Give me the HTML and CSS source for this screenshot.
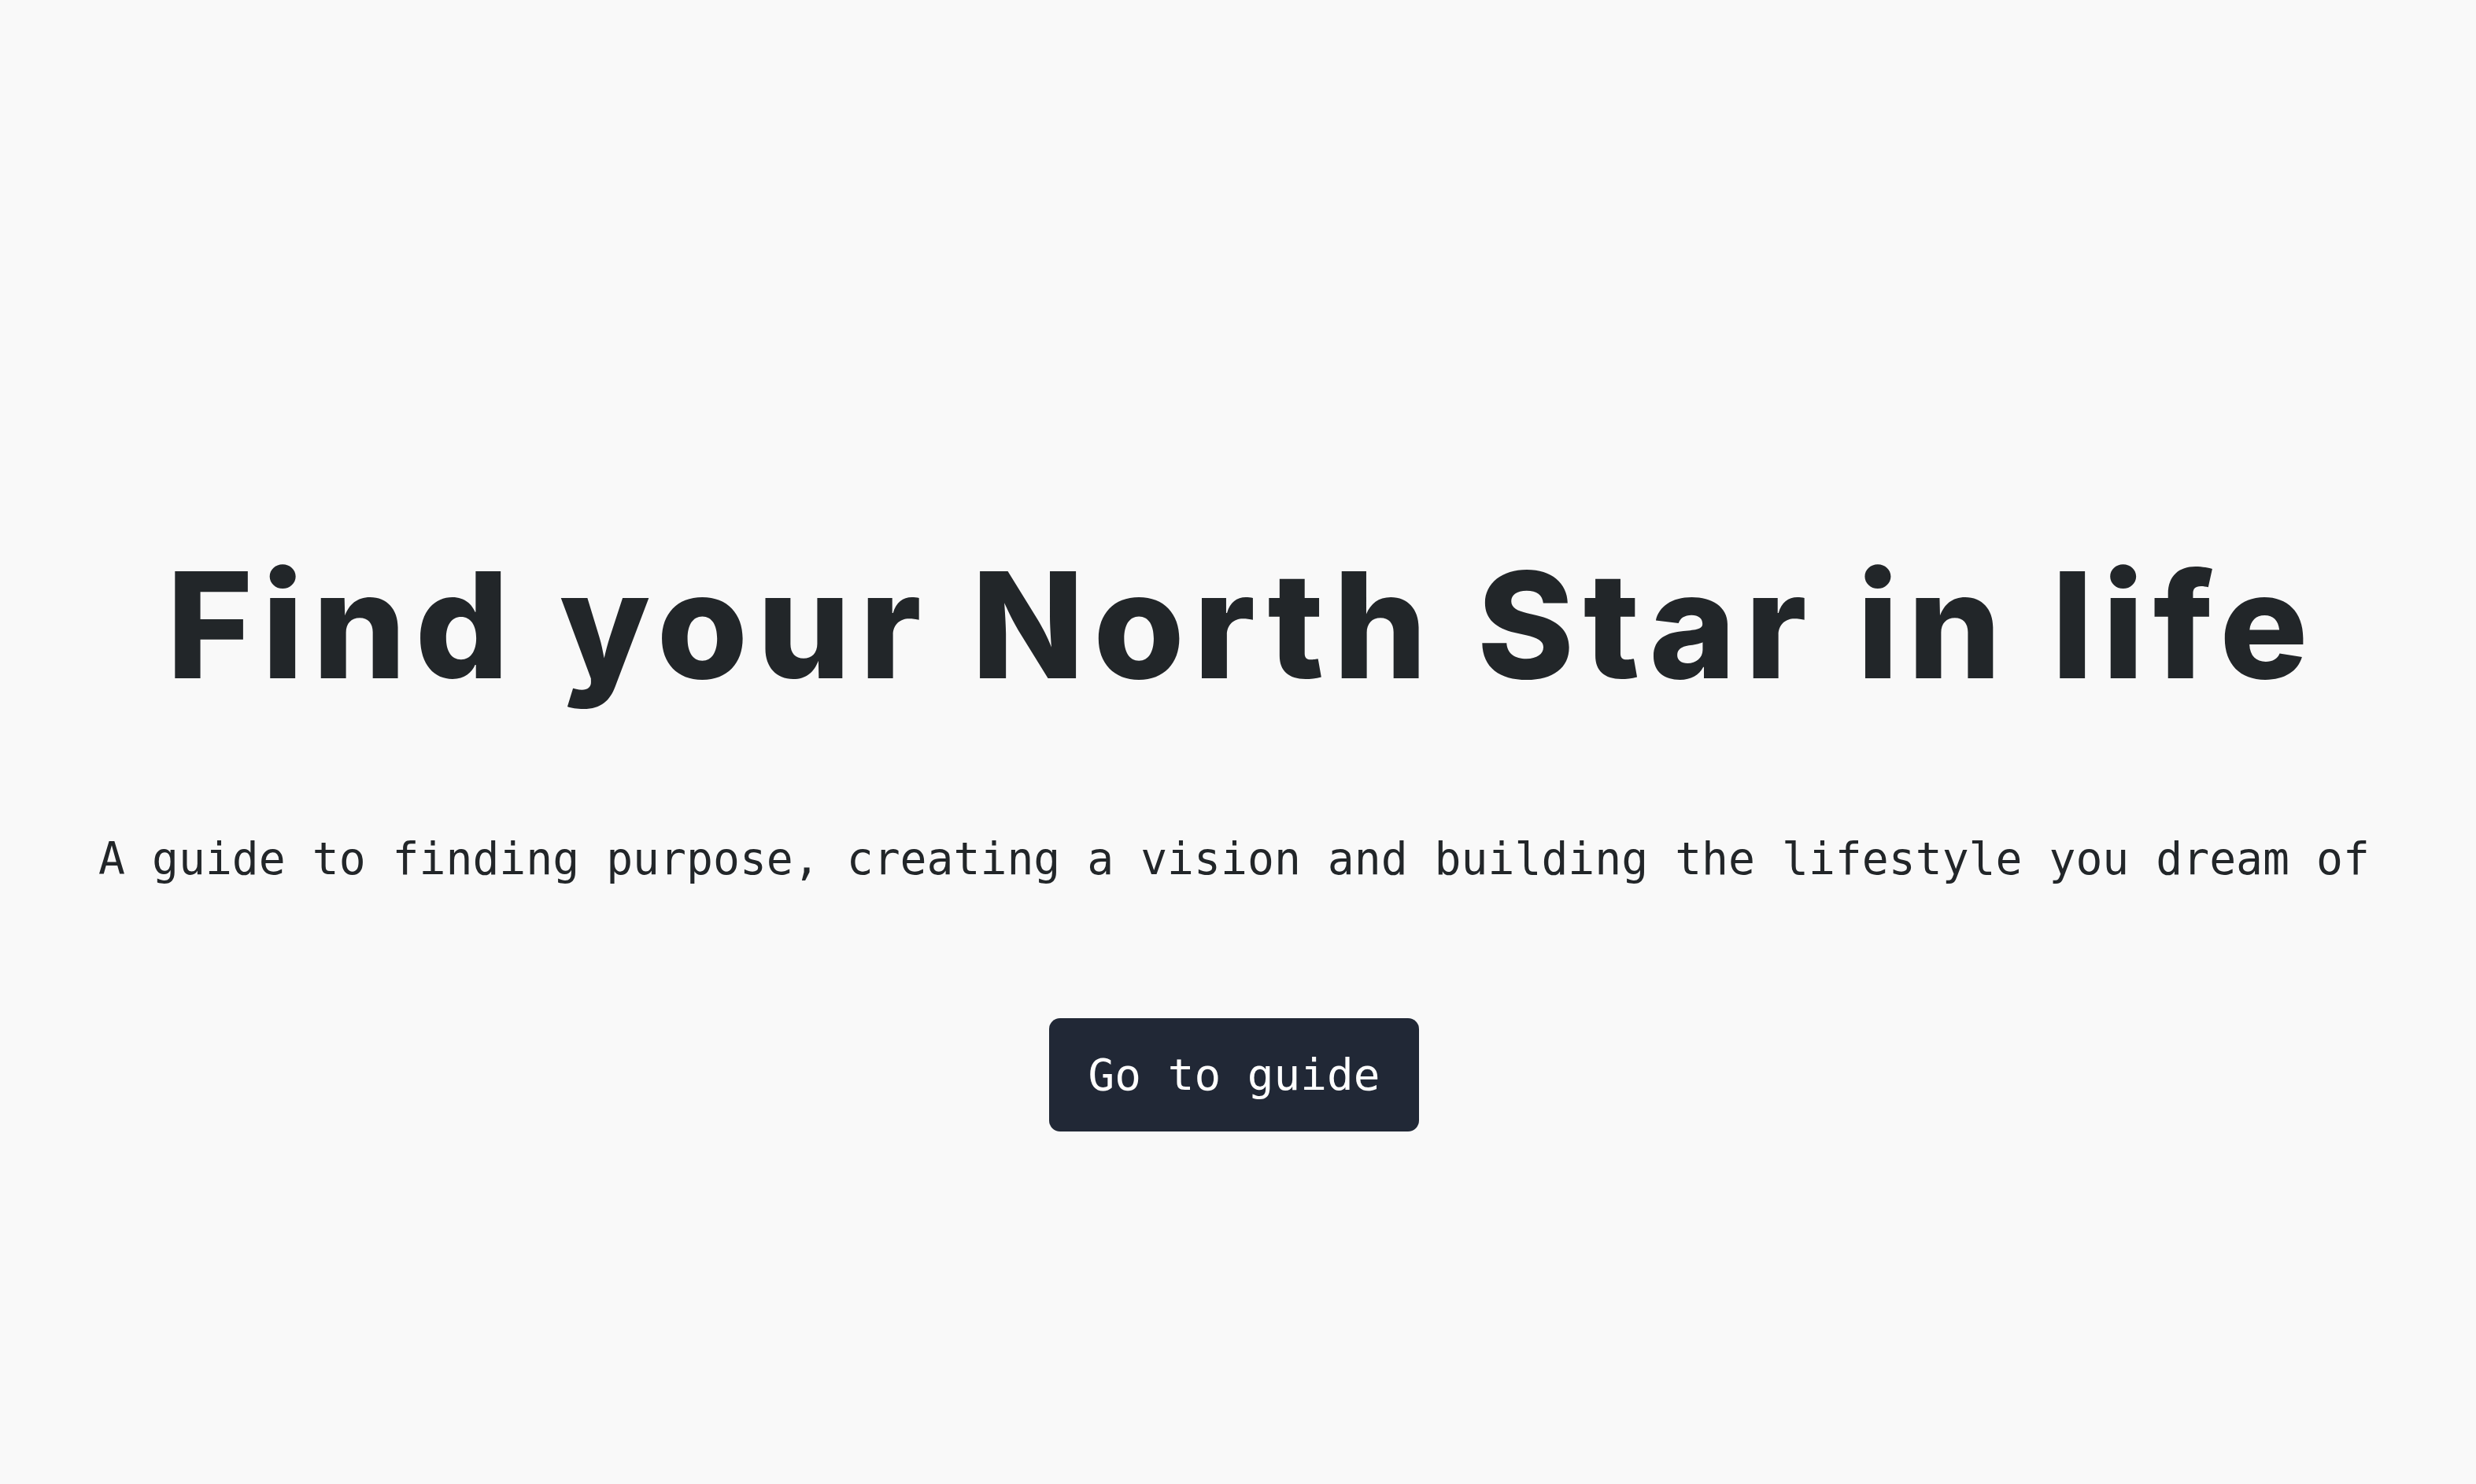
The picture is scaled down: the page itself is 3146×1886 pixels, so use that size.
FILE: index.html
```html
<!DOCTYPE html>
<html lang="en">
<head>
<meta charset="utf-8">
<title>Find your North Star in life</title>
<link rel="stylesheet" href="styles.css">
</head>
<body>
<main class="hero">
  <h1 class="hero-title">Find your North Star in life</h1>
  <p class="hero-subtitle">A guide to finding purpose, creating a vision and building the lifestyle you dream of</p>
  <a class="hero-button" href="#">Go to guide</a>
</main>
</body>
</html>
```
FILE: styles.css
```css
html, body {
  margin: 0;
  padding: 0;
  background: #f9f9f9;
}
.hero {
  min-height: 100vh;
  box-sizing: border-box;
  display: flex;
  flex-direction: column;
  align-items: center;
  padding-top: 682px;
}
.hero-title {
  margin: 0;
  padding-left: 10px;
  font-family: "Inter", "DejaVu Sans", sans-serif;
  font-weight: 800;
  font-size: 187px;
  line-height: 224px;
  color: #222629;
  letter-spacing: 11.5px;
  white-space: nowrap;
}
.hero-subtitle {
  margin: 153px 10px 0 0;
  font-family: "DejaVu Sans Mono", monospace;
  font-size: 56.4px;
  line-height: 65px;
  color: #222629;
  white-space: nowrap;
}
.hero-button {
  margin: 170px 10px 0 0;
  display: inline-block;
  box-sizing: border-box;
  width: 470px;
  height: 144px;
  line-height: 144px;
  text-align: center;
  background: #212836;
  color: #ffffff;
  border-radius: 14px;
  font-family: "DejaVu Sans Mono", monospace;
  font-size: 56px;
  text-decoration: none;
}
```
